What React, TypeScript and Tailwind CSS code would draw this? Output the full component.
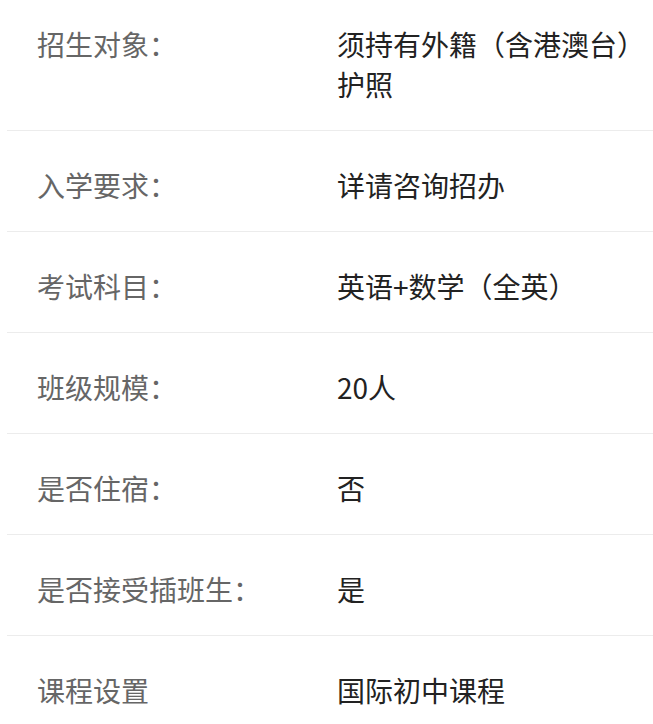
import React from "react";

const rows: [string, string][] = [
  ["招生对象：", "须持有外籍（含港澳台）护照"],
  ["入学要求：", "详请咨询招办"],
  ["考试科目：", "英语+数学（全英）"],
  ["班级规模：", "20人"],
  ["是否住宿：", "否"],
  ["是否接受插班生：", "是"],
  ["课程设置", "国际初中课程"],
];

export default function App() {
  return (
    <div
      className="w-[653px] h-[724px] overflow-hidden bg-white pl-[7px]"
      style={{ fontFamily: '"Noto Sans CJK SC", "Noto Sans", sans-serif' }}
    >
      {rows.map(([label, value], i) => (
        <div
          key={i}
          className={`flex border-b border-[#ececec] pb-[26px] text-[28px] leading-[40px] ${
            i === 0 ? "pt-[24px]" : "pt-[34px]"
          }`}
        >
          <div className="w-[330px] shrink-0 pl-[30px] text-[#666666]">{label}</div>
          <div className="w-[300px] text-[#222222]">{value}</div>
        </div>
      ))}
    </div>
  );
}
